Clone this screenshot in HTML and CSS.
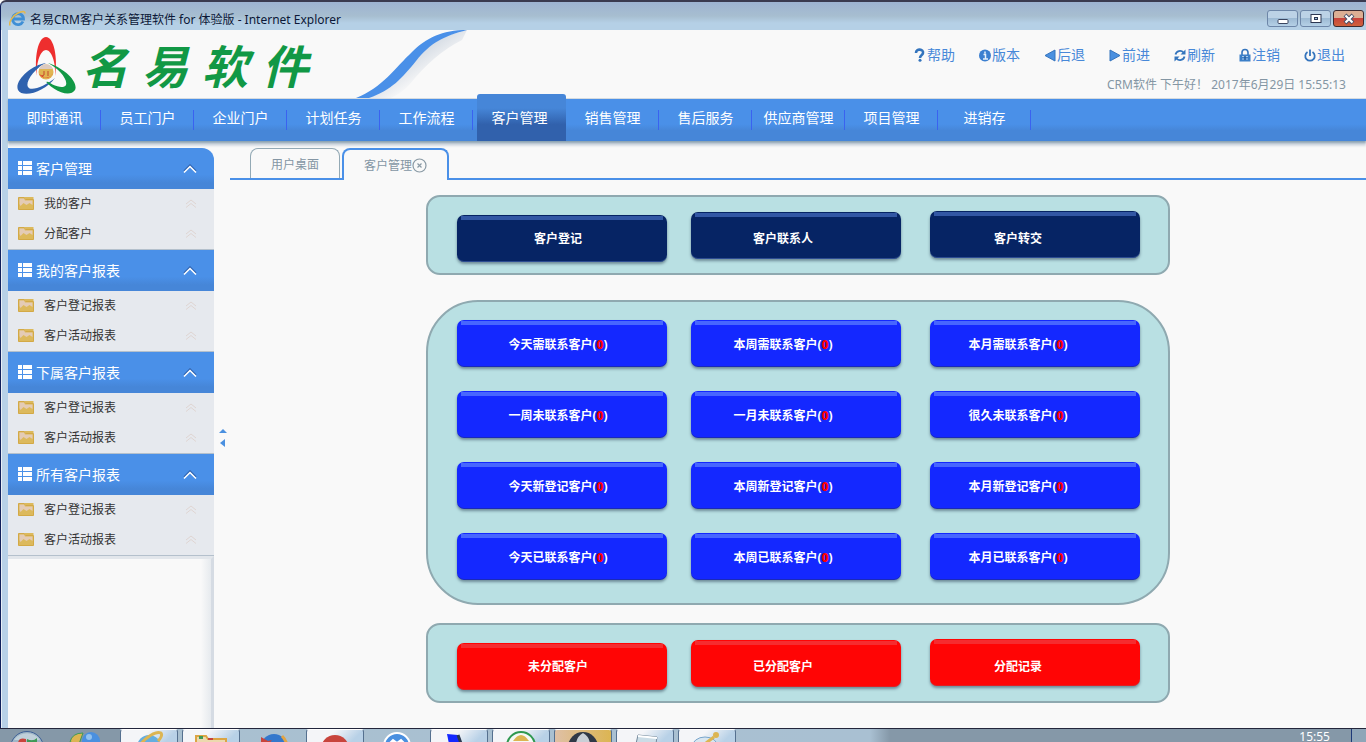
FILE: index.html
```
<!DOCTYPE html>
<html lang="zh-CN">
<head>
    <meta charset="UTF-8">
    <meta name="viewport" content="width=device-width, initial-scale=1.0">
    <title>名易CRM客户关系管理软件 for 体验版</title>
    <link rel="stylesheet" href="styles.css">
</head>
<body>
    <div class="titlebar">
        <svg class="ie-icon" width="17" height="17" viewBox="0 0 17 17">
            <path d="M14 11.500a5.500 5.500 0 1 1 .5-2.500H5" fill="none" stroke="#3f8fd6" stroke-width="2.800"/>
            <path d="M1 15.500C-.5 12 4 5.500 9 3c4-2 7-2.500 7 .5" fill="none" stroke="#e3b84c" stroke-width="1.500"/>
        </svg>
        <span class="title">名易CRM客户关系管理软件 for 体验版 - Internet Explorer</span>
        <div class="window-buttons">
            <button class="win-btn" aria-label="最小化">
                <svg width="12" height="12" viewBox="0 0 12 12"><rect x="1" y="6.500" width="10" height="4" rx="1" fill="#fff" stroke="#3a4560"/></svg>
            </button>
            <button class="win-btn" aria-label="最大化">
                <svg width="12" height="12" viewBox="0 0 12 12"><rect x="1" y="1.500" width="10" height="8" fill="#fff" stroke="#2c3652"/><rect x="4.500" y="4.500" width="3" height="2" fill="#9fc0dc" stroke="#2c3652"/></svg>
            </button>
            <button class="win-btn win-close" aria-label="关闭">
                <svg width="12" height="12" viewBox="0 0 12 12"><path d="M2 2l8 8M10 2l-8 8" stroke="#46506a" stroke-width="4"/><path d="M2.500 2.500l7 7M9.500 2.500l-7 7" stroke="#fff" stroke-width="2.200"/></svg>
            </button>
        </div>
    </div>

    <div class="window">
        <header class="header">
            <div class="brand">
                <svg width="60" height="60" viewBox="0 0 60 60">
                    <path fill="#ee2e2e" d="M20 40C17 22 21 1 29 1c8 0 12 21 9 39 1-15-4-26-9-26s-10 11-9 26z"/>
                    <path fill="#2f62ae" d="M29 27C14 29-3 45 1 54c5 9 28 1 37-12C28 50 14 56 11 51 8 46 17 33 29 27z"/>
                    <path fill="#119845" d="M31 27c14 4 31 18 27 27-6 9-25-1-32-12 8 7 20 12 23 7 2-6-8-17-18-22z"/>
                    <circle cx="29" cy="37" r="9" fill="#f9f9f9"/>
                    <circle cx="29" cy="36" r="7.500" fill="#e0b552"/>
                    <path d="M22 33a7.500 7.500 0 0 1 14 0z" fill="#dccabf"/>
                    <path d="M22 38q3 1 6 4h3q3-1 5-5a8 8 0 0 1-14 1z" fill="#e5392f"/>
                    <path d="M27 35v4l-2 1M31 35v5" stroke="#c5482d" fill="none"/>
                </svg>
                <h1 class="brand-name"><span>名</span><span>易</span><span>软</span><span>件</span></h1>
            </div>
            <svg class="swoosh" width="122" height="68" viewBox="0 0 122 68">
                <defs>
                    <linearGradient id="shade" x1="0" y1="0" x2="1" y2="1">
                        <stop offset=".4" stop-color="#d3dae3"/>
                        <stop offset=".65" stop-color="#f9f9f9"/>
                    </linearGradient>
                </defs>
                <path d="M18 68C46 56 62 26 90 9q14-6 27-9L112 10Q84 24 60 54q-8 9-19 14z" fill="url(#shade)"/>
                <path d="M6 68C32 58 46 37 62 22 76 8 92 0 117 0 94 6 80 13 66 31 52 48 42 60 19 68z" fill="#4a90e8"/>
            </svg>
            <div class="header-right">
                <nav class="tools">
                    <a href="#"><svg width="12" height="14" viewBox="0 0 12 14"><path d="M2 5c0-5 8-4 7 0 0 2-3 2-3 5" fill="none" stroke="#3474bd" stroke-width="2.600"/><circle cx="6" cy="12.200" r="1.500" fill="#3474bd"/></svg>帮助</a>
                    <a href="#"><svg width="12" height="14" viewBox="0 0 12 14"><circle cx="6" cy="7.500" r="6" fill="#3b7fd0"/><path d="M4.500 6.500H6.500V11M4 11h5M6 3.500v2" stroke="#e6f1fc" stroke-width="1.500" fill="none"/></svg>版本</a>
                    <a href="#"><svg width="12" height="14" viewBox="0 0 12 14"><path d="M11 2v11L1 7.500z" fill="#4a90e0" stroke="#3474bd"/></svg>后退</a>
                    <a href="#"><svg width="12" height="14" viewBox="0 0 12 14"><path d="M1 2v11l10-5.500z" fill="#4a90e0" stroke="#3474bd"/></svg>前进</a>
                    <a href="#"><svg width="12" height="14" viewBox="0 0 12 14"><path d="M1.500 6.500a4.600 4.600 0 0 1 8-2M10.500 8.500a4.600 4.600 0 0 1-8 2" fill="none" stroke="#3474bd" stroke-width="1.800"/><path d="M11.500 1.500v5h-5zM.5 13.500v-5h5z" fill="#3474bd"/></svg>刷新</a>
                    <a href="#"><svg width="12" height="14" viewBox="0 0 12 14"><path d="M3 7V4.500a3 3 0 0 1 6 0V7" fill="none" stroke="#3474bd" stroke-width="1.600"/><path d="M.5 6.500h11v7H.5z" fill="#3b7fc8"/><path d="M3 8.500h6M3 11h6" stroke="#a9cbed" /><path d="M6 8v4" stroke="#245a9c" stroke-width="1.500"/></svg>注销</a>
                    <a href="#"><svg width="12" height="14" viewBox="0 0 12 14"><path d="M3.500 4a4.700 4.700 0 1 0 5 0M6 1.500V8" fill="none" stroke="#3474bd" stroke-width="1.800"/></svg>退出</a>
                </nav>
                <div class="welcome">CRM软件 下午好！ 2017年6月29日 15:55:13</div>
            </div>
        </header>

        <nav class="main-nav">
            <a href="#">即时通讯</a>
            <a href="#">员工门户</a>
            <a href="#">企业门户</a>
            <a href="#">计划任务</a>
            <a href="#">工作流程</a>
            <a href="#" class="active">客户管理</a>
            <a href="#">销售管理</a>
            <a href="#">售后服务</a>
            <a href="#">供应商管理</a>
            <a href="#">项目管理</a>
            <a href="#">进销存</a>
        </nav>

        <!-- shared symbols for the side menu -->
        <svg class="symbols" width="0" height="0">
            <symbol id="list" viewBox="0 0 14 14"><path d="M0 0h4v4H0zM5 0h9v4H5zM0 5h4v4H0zM5 5h9v4H5zM0 10h4v4H0zM5 10h9v4H5z" fill="#fff"/></symbol>
            <symbol id="up" viewBox="0 0 14 9"><path d="M1 7l6-6 6 6" fill="none" stroke="#2f62ae" stroke-width="1.500"/><path d="M1 8.500l6-6 6 6" fill="none" stroke="#fff" stroke-width="1.500"/></symbol>
            <symbol id="folder" viewBox="0 0 16 13"><path d="M.5.5h6l1 2h8v10H.5z" fill="#dcb95c" stroke="#d3a945"/><path d="M1.500 7V1.500H6l1 2h7.500V8l-3-2-3 2-3-2-3 3z" fill="#e4cbb5"/><path d="M7 1h8.500" stroke="#dcb95c" stroke-width="2"/></symbol>
            <symbol id="dbl" viewBox="0 0 12 9"><path d="M1 5l5-4 5 4M1 8.500l5-4 5 4" fill="none" stroke="#dfd5d2"/></symbol>
        </svg>

        <div class="body">
            <aside class="sidebar">
                <section>
                    <h2><svg width="14" height="14"><use href="#list"/></svg>客户管理<svg class="arrow" width="14" height="9"><use href="#up"/></svg></h2>
                    <a href="#"><svg width="16" height="13"><use href="#folder"/></svg>我的客户<svg class="arrow" width="12" height="9"><use href="#dbl"/></svg></a>
                    <a href="#"><svg width="16" height="13"><use href="#folder"/></svg>分配客户<svg class="arrow" width="12" height="9"><use href="#dbl"/></svg></a>
                </section>
                <section>
                    <h2><svg width="14" height="14"><use href="#list"/></svg>我的客户报表<svg class="arrow" width="14" height="9"><use href="#up"/></svg></h2>
                    <a href="#"><svg width="16" height="13"><use href="#folder"/></svg>客户登记报表<svg class="arrow" width="12" height="9"><use href="#dbl"/></svg></a>
                    <a href="#"><svg width="16" height="13"><use href="#folder"/></svg>客户活动报表<svg class="arrow" width="12" height="9"><use href="#dbl"/></svg></a>
                </section>
                <section>
                    <h2><svg width="14" height="14"><use href="#list"/></svg>下属客户报表<svg class="arrow" width="14" height="9"><use href="#up"/></svg></h2>
                    <a href="#"><svg width="16" height="13"><use href="#folder"/></svg>客户登记报表<svg class="arrow" width="12" height="9"><use href="#dbl"/></svg></a>
                    <a href="#"><svg width="16" height="13"><use href="#folder"/></svg>客户活动报表<svg class="arrow" width="12" height="9"><use href="#dbl"/></svg></a>
                </section>
                <section>
                    <h2><svg width="14" height="14"><use href="#list"/></svg>所有客户报表<svg class="arrow" width="14" height="9"><use href="#up"/></svg></h2>
                    <a href="#"><svg width="16" height="13"><use href="#folder"/></svg>客户登记报表<svg class="arrow" width="12" height="9"><use href="#dbl"/></svg></a>
                    <a href="#"><svg width="16" height="13"><use href="#folder"/></svg>客户活动报表<svg class="arrow" width="12" height="9"><use href="#dbl"/></svg></a>
                </section>
                <div class="sidebar-rest"></div>
            </aside>

            <div class="splitter">
                <svg width="8" height="18" viewBox="0 0 8 18"><path d="M0 4l4-4 4 4zM6 10v8l-5-4z" fill="#4a90e0"/></svg>
            </div>

            <main class="content">
                <div class="tabs">
                    <button class="tab">用户桌面</button>
                    <button class="tab current">客户管理<svg width="15" height="15" viewBox="0 0 15 15"><circle cx="7.500" cy="7.500" r="6.500" fill="none" stroke="#8a9aa5" stroke-width="1.200"/><path d="M5.500 5.500l4 4M9.500 5.500l-4 4" stroke="#8a9aa5" stroke-width="1.200"/></svg></button>
                </div>

                <div class="panel stagger navy">
                    <button>客户登记</button>
                    <button>客户联系人</button>
                    <button>客户转交</button>
                </div>

                <div class="panel large blue">
                    <button>今天需联系客户(<b>0</b>)</button>
                    <button>本周需联系客户(<b>0</b>)</button>
                    <button>本月需联系客户(<b>0</b>)</button>
                    <button>一周未联系客户(<b>0</b>)</button>
                    <button>一月未联系客户(<b>0</b>)</button>
                    <button>很久未联系客户(<b>0</b>)</button>
                    <button>今天新登记客户(<b>0</b>)</button>
                    <button>本周新登记客户(<b>0</b>)</button>
                    <button>本月新登记客户(<b>0</b>)</button>
                    <button>今天已联系客户(<b>0</b>)</button>
                    <button>本周已联系客户(<b>0</b>)</button>
                    <button>本月已联系客户(<b>0</b>)</button>
                </div>

                <div class="panel stagger red">
                    <button>未分配客户</button>
                    <button>已分配客户</button>
                    <button>分配记录</button>
                </div>
            </main>
        </div>
    </div>

    <footer class="taskbar">
        <div class="launch">
            <svg width="36" height="36" viewBox="0 0 36 36"><circle cx="18" cy="18" r="16.500" fill="#9fb6c6" stroke="#3d5f96"/><path d="M5 10a16 16 0 0 1 26 0z" fill="#c0d0da"/><path d="M9 14q0-7 8-5v9z" fill="#c8443c"/><path d="M18 9q6 3 10-1v9H18z" fill="#3f9a56"/></svg>
            <svg width="36" height="36" viewBox="0 0 36 36"><path d="M3 12q2-9 13-9l-4 11z" fill="#dcb552" stroke="#3f9a56"/><circle cx="24" cy="11" r="9" fill="#4a90e0"/><circle cx="22" cy="7" r="3" fill="#92c2ef"/></svg>
        </div>
        <div class="tasks">
            <div class="task open"><svg width="32" height="32" viewBox="0 0 32 32"><circle cx="16" cy="17" r="12" fill="#64aee0"/><circle cx="16" cy="18" r="6" fill="#dfeaf3"/><path d="M3 26C4 12 22 0 28 3q2 3-3 8" fill="none" stroke="#dcb552" stroke-width="3"/></svg></div>
            <div class="task open"><svg width="32" height="32" viewBox="0 0 32 32"><path d="M1 6h10l2 3h18v20H1z" fill="#ecd9ae" stroke="#dca544" stroke-width="2"/><path d="M4 6h4v3H4z" fill="#3f9a56"/><path d="M13 8h5v2h-5z" fill="#c8443c"/></svg></div>
            <div class="task"><svg width="32" height="32" viewBox="0 0 32 32"><circle cx="17" cy="18" r="13" fill="#3478cc"/><path d="M4 8l7 4 4-1-4 5-7 2z" fill="#c8443c"/><path d="M25 7q7 7 4 16" stroke="#e3a444" stroke-width="3" fill="none"/></svg></div>
            <div class="task open"><svg width="32" height="32" viewBox="0 0 32 32"><circle cx="16" cy="19" r="14" fill="#c8443c"/><path d="M10 15q6-4 12 0" stroke="#e9c4b6" fill="none" stroke-width="2"/></svg></div>
            <div class="task"><svg width="32" height="32" viewBox="0 0 32 32"><circle cx="16" cy="17" r="13" fill="#4a90e0" stroke="#fff" stroke-width="2"/><path d="M9 14l3-3 4 3 4-3 3 3" stroke="#fff" stroke-width="2" fill="none"/></svg></div>
            <div class="task open"><svg width="32" height="32" viewBox="0 0 32 32"><path d="M4 4l11 1 5 14H7z" fill="#1428ff"/><path d="M15 5l5 14h7" stroke="#2b3850" stroke-width="3" fill="none"/></svg></div>
            <div class="task open"><svg width="32" height="32" viewBox="0 0 32 32"><circle cx="16" cy="16" r="14" fill="#f5f8f6" stroke="#2f9850" stroke-width="2"/><path d="M8 11q8-12 16 0z" fill="#dcb552"/></svg></div>
            <div class="task open alert"><svg width="32" height="32" viewBox="0 0 32 32"><circle cx="16" cy="17" r="15" fill="#303846"/><path d="M16 3q-7 4-7 12h14q0-8-7-12z" fill="#c9cfd6"/></svg></div>
            <div class="task open"><svg width="32" height="32" viewBox="0 0 32 32"><path d="M9 5l19 2-3 20H4z" fill="#cbdce6" stroke="#74889a"/><path d="M9 6l19 2" stroke="#fff" stroke-width="2"/></svg></div>
            <div class="task open"><svg width="32" height="32" viewBox="0 0 32 32"><ellipse cx="14" cy="17" rx="13" ry="10" fill="#d8e6f0" stroke="#7aa6cc"/><path d="M15 13l8-6" stroke="#dcb552" stroke-width="3"/><circle cx="25" cy="5" r="3" fill="#dcb552"/></svg></div>
        </div>
        <div class="tray"><time>15:55</time></div>
        <button class="show-desktop" aria-label="显示桌面"></button>
    </footer>
</body>
</html>
```
FILE: styles.css
```
* {
    box-sizing: border-box;
}

body {
    margin: 0;
    height: 100vh;
    display: flex;
    flex-direction: column;
    overflow: hidden;
    background-color: #f9f9f9;
    font-family: "Noto Sans", "Noto Sans CJK SC", sans-serif;
    font-size: 12px;
    color: #333;
}

a {
    text-decoration: none;
    color: inherit;
}

button {
    font-family: inherit;
    font-size: 12px;
    border: none;
    padding: 0;
    cursor: pointer;
}

svg {
    flex: none;
    display: block;
}

.symbols {
    position: absolute;
}

/* window frame */
.titlebar {
    flex: 0 0 30px;
    display: flex;
    align-items: center;
    padding: 5px 2px 0 8px;
    border-top: 2px solid #3a3a50;
    border-left: 1px solid #10205a;
    border-top-left-radius: 6px;
    background: linear-gradient(#9db3d2, #a7bed0 50%, #b5d0e6 75%);
}

.title {
    margin-left: 4px;
    color: #0c1838;
}

.window-buttons {
    display: flex;
    gap: 2px;
    margin-left: auto;
}

.win-btn {
    width: 31px;
    height: 17px;
    display: flex;
    align-items: center;
    justify-content: center;
    border: 1px solid #6d86a8;
    border-radius: 3px;
    background: linear-gradient(#bcd2e6 50%, #9dbad4 50%, #b5d0e6);
}

.win-close {
    border-color: #3b2a30;
    background: linear-gradient(#dcae93 50%, #c8443c 50%, #d0623c);
}

.window {
    flex: 1;
    min-height: 0;
    display: flex;
    flex-direction: column;
    padding-left: 8px;
    background: linear-gradient(to right, #10205a 1px, #e8eff6 1px, #e8eff6 2px, #b8d1e7 2px, #b8d1e7 8px, #f9f9f9 8px);
}

/* header */
.header {
    flex: 0 0 68px;
    display: flex;
}

.brand {
    flex: 0 0 342px;
    display: flex;
    align-items: center;
    padding-left: 9px;
    padding-top: 4px;
}

.brand-name {
    display: flex;
    gap: 14px;
    margin: 0 0 0 5px;
    font-size: 46px;
    line-height: 60px;
    font-style: italic;
    font-weight: bold;
    color: #119845;
}

.header-right {
    margin-left: auto;
    padding: 15px 20px 0 0;
    text-align: right;
}

.tools {
    display: flex;
    justify-content: flex-end;
    gap: 24px;
    padding-right: 1px;
}

.tools a {
    display: flex;
    align-items: center;
    gap: 1px;
    font-size: 14px;
    line-height: 20px;
    color: #4788d8;
}

.welcome {
    margin-top: 10px;
    font-size: 12px;
    line-height: 20px;
    color: #8496a4;
}

/* main menu */
.main-nav {
    flex: 0 0 43px;
    display: flex;
    border-top: 1px solid #d5dbe0;
    background: linear-gradient(#4a90e8 60%, #4686d8 75%);
    box-shadow: 0 2px 2px #8ba2b2, 0 5px 2px #d5dbe3;
}

.main-nav a {
    width: 93px;
    font-size: 14px;
    line-height: 38px;
    text-align: center;
    color: #fff;
    background: linear-gradient(#3a62f0, #3a62f0) right 11px / 1px 20px no-repeat;
}

.main-nav .active {
    width: 89px;
    margin: -5px 0 0 4px;
    padding: 5px 4px 0 0;
    border-radius: 3px 3px 0 0;
    background: linear-gradient(#4686d8 30%, #3161ac 65%);
}

/* body */
.body {
    flex: 1;
    min-height: 0;
    display: flex;
    padding-top: 7px;
}

.sidebar {
    flex: 0 0 206px;
    display: flex;
    flex-direction: column;
}

.sidebar section {
    border-bottom: 1px solid #b4c0cc;
    background-color: #e6e9ee;
}

.sidebar h2 {
    display: flex;
    align-items: center;
    gap: 4px;
    height: 41px;
    margin: 0;
    padding: 0 17px 1px 10px;
    font-size: 14px;
    font-weight: normal;
    color: #fff;
    background: linear-gradient(#4a90e8 65%, #4686d8 85%);
}

.sidebar section:first-child,
.sidebar section:first-child h2 {
    border-top-right-radius: 12px;
}

.sidebar a {
    display: flex;
    align-items: center;
    gap: 10px;
    height: 30px;
    padding: 0 17px 2px 10px;
}

.sidebar .arrow {
    margin-left: auto;
}

.sidebar-rest {
    flex: 1;
    border-top: 3px solid #e2e6eb;
    border-right: 3px solid #d5dbe3;
    background: linear-gradient(to right, #f9f9f9 95%, #e6eaee);
}

.splitter {
    flex: 0 0 16px;
    display: flex;
    align-items: center;
    justify-content: center;
    padding-left: 2px;
}

.content {
    flex: 1;
    display: flex;
    flex-direction: column;
    align-items: center;
}

.tabs {
    align-self: stretch;
    display: flex;
    align-items: flex-end;
    gap: 2px;
    height: 32px;
    margin-bottom: 15px;
    padding-left: 20px;
    background: linear-gradient(#4a90e8, #4a90e8) bottom / 100% 2px no-repeat;
}

.tab {
    width: 90px;
    height: 30px;
    margin-bottom: 2px;
    border: 1px solid #93a9b5;
    border-bottom: none;
    border-radius: 8px 8px 0 0;
    background-color: #f9f9f9;
    color: #8496a4;
}

.tab.current {
    display: flex;
    align-items: center;
    justify-content: center;
    width: 107px;
    height: 32px;
    margin-bottom: 0;
    border: 2px solid #4a90e8;
    border-bottom: none;
}

/* button panels */
.panel {
    display: grid;
    grid-template-columns: 234px 239px 210px;
    row-gap: 24px;
    width: 744px;
    border: 2px solid #8fa9b0;
    border-radius: 14px;
    background-color: #b9e0e3;
}

.panel.large {
    margin: 25px 0 18px;
    padding: 18px 29px 23px;
    border-radius: 52px;
}

.panel.stagger {
    padding: 14px 29px 11px;
}

.panel button {
    width: 210px;
    height: 47px;
    border-radius: 7px;
    font-weight: bold;
    color: #fff;
    background-position: 50% 1px;
    background-size: 202px 4px;
    background-repeat: no-repeat;
}

.panel button b {
    color: #f00;
}

.panel button:nth-child(3n+1) {
    padding-right: 8px;
}

.panel button:nth-child(3n+2) {
    padding-right: 26px;
}

.panel button:nth-child(3n) {
    padding-right: 34px;
}

.stagger button:nth-child(1) {
    margin-top: 4px;
    padding-bottom: 2px;
}

.stagger button:nth-child(2) {
    margin-top: 1px;
    padding-top: 4px;
}

.stagger button:nth-child(3) {
    padding-top: 6px;
}

.navy button {
    background-color: #062464;
    background-image: linear-gradient(#3257a4, #3257a4);
    box-shadow: inset 0 -1px #2c4c92, 0 2px 3px #6e8c98;
}

.blue button {
    background-color: #1428ff;
    background-image: linear-gradient(#4766ff, #4766ff);
    box-shadow: inset 0 -1px #1a2ab8, 0 2px 3px #6e8c98;
}

.red button {
    background-color: #ff0505;
    background-image: linear-gradient(#f62c2f, #f62c2f);
    box-shadow: inset 0 -1px #e21f22, 0 2px 3px #6e8c98;
}

/* taskbar */
.taskbar {
    flex: 0 0 14px;
    display: flex;
    align-items: flex-start;
    overflow: hidden;
    border-top: 1px solid #23263c;
    background: linear-gradient(to right, #8598a8 120px, #a9c0d0 120px, #a9c0d2 870px, #8598a8 890px);
}

.launch {
    flex: 0 0 120px;
    display: flex;
    gap: 22px;
    padding: 1px 0 0 9px;
}

.tasks {
    display: flex;
    gap: 4px;
}

.task {
    display: flex;
    justify-content: center;
    width: 58px;
    height: 40px;
}

.task.open {
    border: 1px solid #55708f;
    border-top-color: #fff;
    border-radius: 3px;
    background: linear-gradient(135deg, #f4f5f8 30%, #b8d1e7 60%);
}

.task.alert {
    background: linear-gradient(to right, #dfc0a6, #dcb552);
}

.tray {
    margin-left: auto;
    padding-right: 21px;
    line-height: 16px;
    color: #fff;
}

.show-desktop {
    width: 15px;
    height: 40px;
    border-left: 1px solid #1e3a78;
    background-color: #8fa6b8;
}
```
